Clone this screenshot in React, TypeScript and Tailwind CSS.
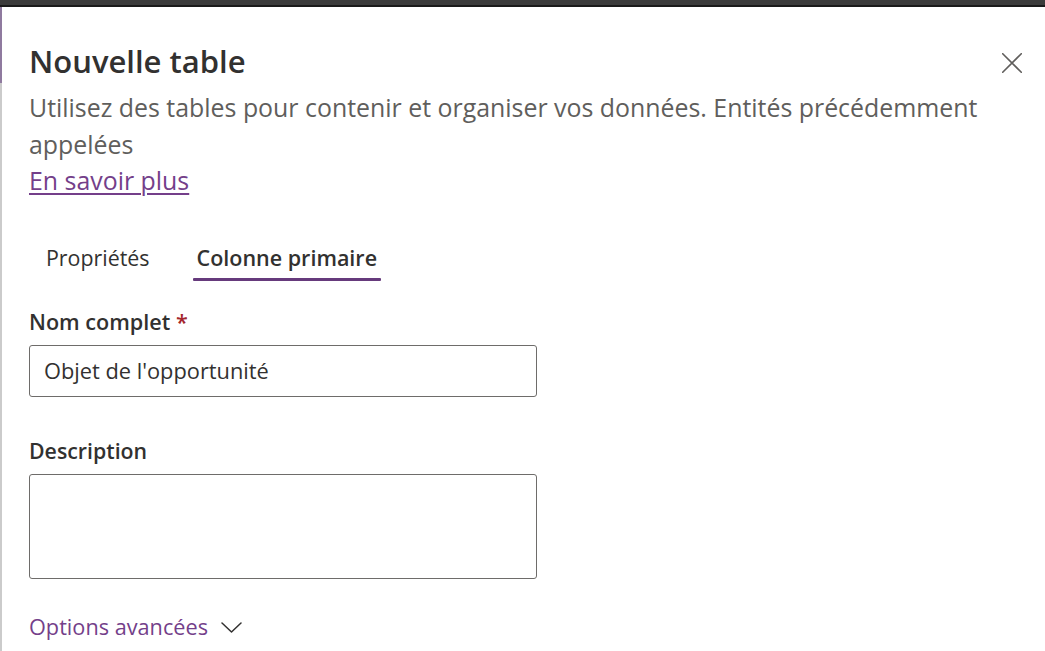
import React from "react";

const font = { fontFamily: '"Open Sans", "Noto Sans", sans-serif' };

export default function App() {
  return (
    <div
      className="w-[1045px] h-[651px] bg-white flex flex-col overflow-hidden"
      style={font}
    >
      {/* top dark bar */}
      <div className="h-[5px] bg-[#3b3b3b] shrink-0" />
      <div className="h-[2px] bg-[#1a1a1a] shrink-0" />

      <div className="flex flex-1 min-h-0">
        {/* left edge strip */}
        <div className="w-[2px] shrink-0 flex flex-col">
          <div className="h-[76px] bg-[#8f7a9f]" />
          <div className="flex-1 bg-[#cbcbcb]" />
        </div>

        {/* panel content */}
        <div className="flex-1 pl-[27px] pr-[23px] pt-[34px] flex flex-col">
          <div className="flex items-start justify-between">
            <h1 className="text-[31px] leading-[40px] font-semibold text-[#323130] tracking-normal">
              Nouvelle table
            </h1>
            <button className="mt-[12px] w-[20px] h-[20px] flex items-center justify-center text-[#605e5c]">
              <svg width="20" height="20" viewBox="0 0 20 20" fill="none">
                <path
                  d="M0.7 0.7L19.3 19.3M19.3 0.7L0.7 19.3"
                  stroke="currentColor"
                  strokeWidth="1.6"
                  strokeLinecap="round"
                />
              </svg>
            </button>
          </div>

          <div className="mt-[8px] text-[24.9px] leading-[36.5px] text-[#605e5c]">
            <p>
              Utilisez des tables pour contenir et organiser vos données. Entités précédemment appelées
            </p>
            <a
              href="#"
              className="block w-fit text-[#743f8a] underline underline-offset-[3px] decoration-[1.5px]"
            >
              En savoir plus
            </a>
          </div>

          {/* tabs */}
          <div className="mt-[44px] flex gap-[39px] pl-[13px]">
            <div className="px-[4px] flex flex-col">
              <span className="text-[21.4px] leading-[30px] text-[#323130]">Propriétés</span>
              <span className="mt-[5px] h-[3px]" />
            </div>
            <div className="px-[4px] flex flex-col">
              <span className="text-[21.5px] leading-[30px] font-semibold text-[#323130]">
                Colonne primaire
              </span>
              <span className="mt-[5px] h-[3px] bg-[#663a7c] -mx-[4px] rounded-[1px]" />
            </div>
          </div>

          {/* Nom complet */}
          <label className="mt-[26px] text-[21.6px] leading-[30px] font-semibold text-[#323130]">
            Nom complet <span className="text-[#a4262c]">*</span>
          </label>
          <div className="mt-[8px] w-[508px] h-[52px] border border-[#6e6c6a] rounded-[3px] flex items-center pl-[14px]">
            <span className="text-[21.8px] leading-[30px] text-[#323130]">
              Objet de l'opportunité
            </span>
          </div>

          {/* Description */}
          <label className="mt-[39px] text-[21.3px] leading-[30px] font-semibold text-[#323130]">
            Description
          </label>
          <div className="mt-[8px] w-[508px] h-[105px] border border-[#6e6c6a] rounded-[3px]" />

          {/* Options avancées */}
          <div className="mt-[33px] flex items-center gap-[13px]">
            <span className="text-[21.7px] leading-[30px] text-[#743f8a]">Options avancées</span>
            <svg width="21" height="11" viewBox="0 0 21 11" fill="none" className="mt-[1px]">
              <path
                d="M1 1L10.5 10L20 1"
                stroke="#323130"
                strokeWidth="1.5"
                strokeLinecap="round"
                strokeLinejoin="round"
              />
            </svg>
          </div>
        </div>
      </div>
    </div>
  );
}
